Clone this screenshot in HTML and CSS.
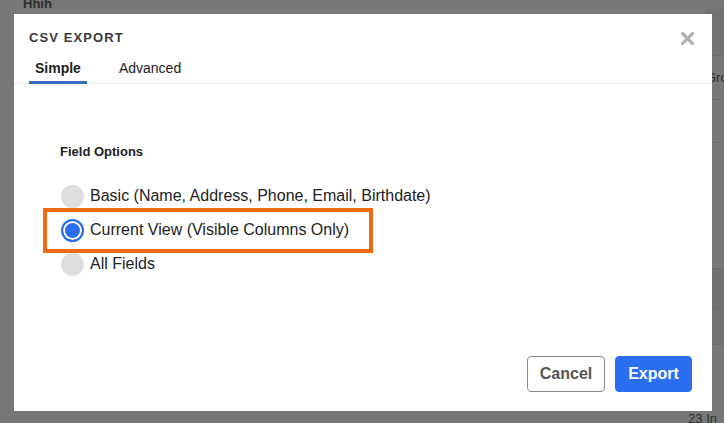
FILE: index.html
```html
<!DOCTYPE html>
<html lang="en">
<head>
<meta charset="utf-8">
<title>CSV Export</title>
<link rel="stylesheet" href="styles.css">
</head>
<body>
<div class="page">
  <div class="page-title">Hhih</div>
  <div class="page-main">
    <div class="page-spacer"></div>
    <div class="page-side">
      <div class="side-row side-a"></div>
      <div class="side-row side-b"><span class="side-text">Gro</span></div>
      <div class="side-row side-c"></div>
      <div class="side-row side-d"></div>
      <div class="side-row side-e"></div>
      <div class="side-row side-f"></div>
    </div>
  </div>
  <div class="page-foot">23 In</div>
</div>

<div class="modal" role="dialog" aria-label="CSV Export">
  <div class="modal-header">
    <div class="modal-title">CSV EXPORT</div>
    <button class="close" aria-label="Close">
      <svg width="13" height="13" viewBox="0 0 13 13"><path d="M1.5 1.5 L11.5 11.5 M11.5 1.5 L1.5 11.5" stroke="#b3b3b3" stroke-width="3.2" stroke-linecap="square"/></svg>
    </button>
  </div>
  <div class="tabs">
    <div class="tab active">Simple</div>
    <div class="tab">Advanced</div>
  </div>
  <div class="modal-body">
    <div class="section-label">Field Options</div>
    <div class="options">
      <label class="option"><span class="radio"></span><span class="option-text">Basic (Name, Address, Phone, Email, Birthdate)</span></label>
      <label class="option"><span class="radio checked"></span><span class="option-text">Current View (Visible Columns Only)</span><span class="highlight"></span></label>
      <label class="option"><span class="radio"></span><span class="option-text">All Fields</span></label>
    </div>
  </div>
  <div class="modal-footer">
    <button class="btn btn-cancel">Cancel</button>
    <button class="btn btn-export">Export</button>
  </div>
</div>
</body>
</html>
```

FILE: styles.css
```css
* { box-sizing: border-box; }
html, body { margin: 0; padding: 0; }
body {
  width: 724px;
  height: 423px;
  overflow: hidden;
  background: #777777;
  font-family: "Liberation Sans", Arial, sans-serif;
}

.page {
  height: 423px;
  display: flex;
  flex-direction: column;
}
.page-title {
  padding-left: 23px;
  margin-top: -3px;
  height: 12px;
  font-size: 13px;
  font-weight: bold;
  color: #2e2e2e;
  line-height: 14px;
}
.page-main {
  flex: 1;
  display: flex;
}
.page-spacer { flex: 1; }
.page-side {
  width: 18px;
  display: flex;
  flex-direction: column;
  overflow: hidden;
}
.side-row { border-bottom: 1px solid #6b6b6b; }
.side-a { height: 47px; background: #727272; }
.side-b { height: 44px; display: flex; align-items: center; }
.side-text { font-size: 13px; color: #262626; white-space: nowrap; }
.side-c { height: 43px; }
.side-d { height: 126px; }
.side-e { height: 40px; background: #717171; }
.side-f { height: 36px; background: #737373; }
.page-foot {
  height: 12px;
  text-align: right;
  padding-right: 7px;
  font-size: 13px;
  line-height: 16px;
  color: #2e2e2e;
  overflow: hidden;
}

.modal {
  position: fixed;
  left: 14px;
  top: 14px;
  width: 698px;
  height: 397px;
  background: #ffffff;
  display: flex;
  flex-direction: column;
}
.modal-header {
  display: flex;
  justify-content: space-between;
  align-items: flex-start;
  padding: 15px 18px 0 15px;
}
.modal-title {
  font-size: 13px;
  line-height: 18px;
  font-weight: bold;
  letter-spacing: 1.1px;
  color: #3a3a3a;
}
.close {
  border: 0;
  background: none;
  padding: 0;
  margin-top: 3px;
  width: 13px;
  height: 13px;
  display: flex;
  cursor: pointer;
}

.tabs {
  display: flex;
  gap: 26px;
  margin-top: 13px;
  padding-left: 15px;
  border-bottom: 1px solid #e8e8e8;
}
.tab {
  padding: 0 6px 4px;
  font-size: 14px;
  line-height: 17px;
  color: #222;
  border-bottom: 3px solid transparent;
  margin-bottom: -1px;
}
.tab.active {
  font-weight: bold;
  border-bottom-color: #3b6cc0;
}

.modal-body {
  flex: 1;
  padding: 60px 0 0 46px;
}
.section-label {
  font-size: 13px;
  line-height: 16px;
  font-weight: bold;
  color: #222;
}
.options {
  margin-top: 19px;
  display: flex;
  flex-direction: column;
}
.option {
  position: relative;
  height: 34px;
  display: flex;
  align-items: center;
  gap: 6px;
  padding-left: 1px;
}
.radio {
  width: 23px;
  height: 23px;
  border-radius: 50%;
  background: #dedede;
  flex: none;
}
.radio.checked {
  background: #2a6ef0;
  border: 2px solid #2a6ef0;
  box-shadow: inset 0 0 0 2px #ffffff;
}
.option-text {
  font-size: 16px;
  color: #222;
  white-space: nowrap;
}
.highlight {
  position: absolute;
  left: -17px;
  top: -5px;
  width: 330px;
  height: 45px;
  border: 4px solid #f06a12;
  pointer-events: none;
}

.modal-footer {
  display: flex;
  justify-content: flex-end;
  gap: 10px;
  padding: 0 20px 19px 0;
}
.btn {
  height: 36px;
  border-radius: 4px;
  font-family: "Liberation Sans", Arial, sans-serif;
  font-size: 16px;
  font-weight: bold;
  padding: 0;
  cursor: pointer;
}
.btn-cancel {
  width: 78px;
  background: #ffffff;
  border: 1px solid #8a8a8a;
  color: #555555;
}
.btn-export {
  width: 77px;
  background: #2a6ef2;
  border: 1px solid #2a6ef2;
  color: #ffffff;
}
```
